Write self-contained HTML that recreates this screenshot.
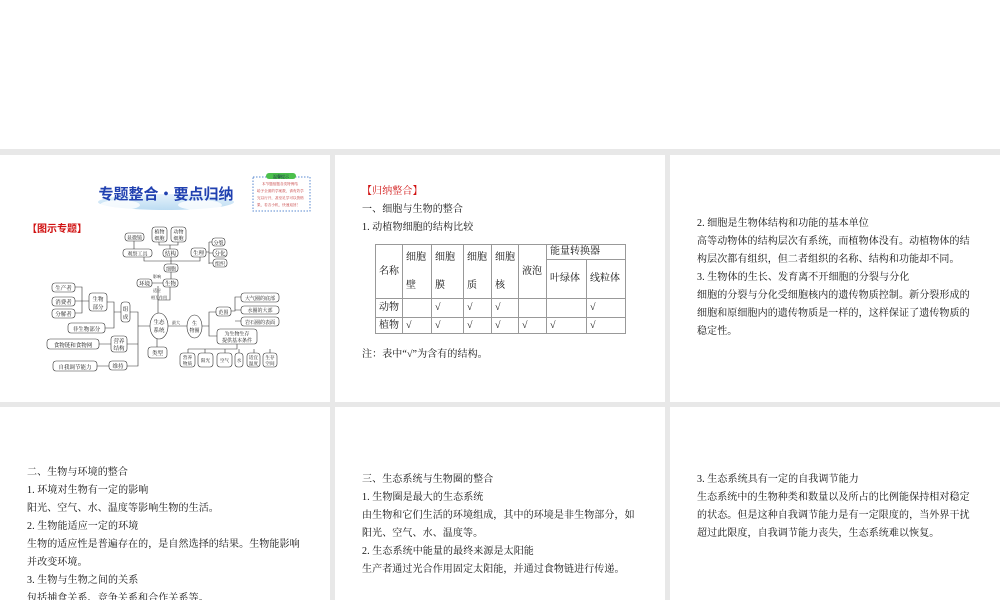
<!DOCTYPE html>
<html><head><meta charset="utf-8"><style>
*{margin:0;padding:0;box-sizing:border-box}
body{width:1000px;height:600px;overflow:hidden;background:#fff;position:relative;font-family:"Liberation Serif","Noto Serif CJK SC",serif;color:#111}
.band{position:absolute;background:#e8e8e8}
.s{position:absolute;background:#fff;overflow:hidden}
.t{position:absolute;font-size:10px;line-height:18px;white-space:nowrap;letter-spacing:0.1px}
.red{color:#d01010}
table{position:absolute;border-collapse:collapse;font-size:10px;line-height:14px}
td{border:1px solid #999;padding:0 3px;vertical-align:middle}
</style></head><body>
<div class="band" style="left:0;top:149px;width:1000px;height:6px"></div>
<div class="band" style="left:0;top:402px;width:1000px;height:5px"></div>
<div class="band" style="left:330px;top:155px;width:5px;height:445px"></div>
<div class="band" style="left:665px;top:155px;width:5px;height:445px"></div>

<!-- slide 1 -->
<div class="s" style="left:0;top:155px;width:330px;height:247px">
<svg width="330" height="247" style="position:absolute;left:0;top:0" font-family="Noto Serif CJK SC, serif">
<defs><linearGradient id="cl" x1="0" y1="0" x2="0" y2="1"><stop offset="0" stop-color="#e6f2fb"/><stop offset="1" stop-color="#bcdcf2"/></linearGradient></defs>
<ellipse cx="166" cy="47" rx="68" ry="8" fill="url(#cl)"/>
<ellipse cx="120" cy="50" rx="20" ry="5" fill="#fff" opacity="0.8"/>
<ellipse cx="200" cy="50" rx="22" ry="5" fill="#fff" opacity="0.8"/>
<text x="166" y="44" font-size="15" font-weight="bold" fill="#2040b0" text-anchor="middle" font-family="Noto Sans CJK SC, sans-serif">专题整合·要点归纳</text>
<rect x="253" y="22" width="57" height="34" fill="#fff" stroke="#5a8ad0" stroke-dasharray="1.5,1.5"/>
<rect x="266" y="18" width="30" height="6" rx="3" fill="#4cc04c"/>
<text x="281" y="23" font-size="4" fill="#114" text-anchor="middle">温馨提示</text>
<g font-size="3.6" fill="#c03030"><text x="262" y="30">本节题组题各类特例结</text><text x="257" y="37">给予全面的学案数，请有效学</text><text x="257" y="44">完以行开，甚至足学可以资格</text><text x="257" y="51">果，若否小机，快速返回！</text></g>
<text x="27" y="77" font-size="10" font-weight="bold" fill="#d01010" font-family="Noto Sans CJK SC, sans-serif">【图示专题】</text>
<g transform="translate(0,-155)" stroke="#333" stroke-width="0.6" fill="none">
<!-- lines -->
<path d="M134 241V249M159 242V245H178V242M170 245V249M144 257V261H200V257M206 252H209M209 242V264M209 242H213M209 253H213M209 263H213M171 257V264M171 272V279M152 283H163M158 286V300M170 287V300H158M158 300V313"/>
<path d="M75 287H82V313H75M75 301H89M82 313V313M107 302H114V328H105M114 312H121M130 312H138V366H127M127 344H138M138 326H150M99 344H111M97 366H109M157 339V347"/>
<path d="M168 326H187M202 326H209V312H216M209 326V336H217M231 311H235V297H241M235 310H241M235 321H241M237 344V349H188M188 349V353M205 349V353M225 349V353M239 349V353M254 349V353M270 349V353"/>
</g>
<g transform="translate(0,-155)" font-size="5.5" fill="#111" text-anchor="middle">
<g fill="#fff" stroke="#333" stroke-width="0.6">
<rect x="125" y="233" width="19" height="8" rx="3"/>
<rect x="152" y="227" width="15" height="15" rx="3"/>
<rect x="171" y="227" width="15" height="15" rx="3"/>
<rect x="123" y="249" width="29" height="8" rx="3"/>
<rect x="163" y="249" width="15" height="8" rx="3"/>
<rect x="191" y="248" width="15" height="9" rx="3"/>
<rect x="212" y="238" width="13" height="8" rx="3"/>
<rect x="213" y="249" width="14" height="8" rx="3"/>
<rect x="213" y="259" width="14" height="8" rx="3"/>
<rect x="164" y="264" width="14" height="8" rx="3"/>
<rect x="137" y="279" width="15" height="8" rx="3"/>
<rect x="163" y="279" width="15" height="8" rx="3"/>
<rect x="52" y="283" width="23" height="9" rx="3"/>
<rect x="52" y="297" width="23" height="9" rx="3"/>
<rect x="52" y="309" width="23" height="9" rx="3"/>
<rect x="89" y="293" width="18" height="18" rx="3"/>
<rect x="68" y="323" width="37" height="10" rx="3"/>
<rect x="121" y="302" width="9" height="20" rx="3"/>
<ellipse cx="159" cy="326" rx="9" ry="13"/>
<rect x="47" y="339" width="52" height="10" rx="3"/>
<rect x="111" y="336" width="16" height="16" rx="3"/>
<rect x="148" y="347" width="19" height="11" rx="3"/>
<rect x="53" y="361" width="44" height="10" rx="3"/>
<rect x="109" y="361" width="18" height="9" rx="3"/>
<ellipse cx="194.5" cy="326.5" rx="7.5" ry="11.5"/>
<rect x="216" y="307" width="15" height="9" rx="3"/>
<rect x="241" y="293" width="38" height="9" rx="3"/>
<rect x="241" y="306" width="38" height="8" rx="3"/>
<rect x="241" y="317" width="38" height="9" rx="3"/>
<rect x="217" y="329" width="40" height="15" rx="3"/>
<rect x="180" y="353" width="15" height="14" rx="3"/>
<rect x="198" y="353" width="15" height="14" rx="3"/>
<rect x="217" y="353" width="15" height="14" rx="3"/>
<rect x="235" y="353" width="8" height="14" rx="3"/>
<rect x="247" y="353" width="13" height="14" rx="3"/>
<rect x="263" y="353" width="14" height="14" rx="3"/>
</g>
<text x="134.5" y="239.5" font-size="5">显微镜</text>
<text x="159.5" y="233.5" font-size="5">植物</text><text x="159.5" y="240" font-size="5">细胞</text>
<text x="178.5" y="233.5" font-size="5">动物</text><text x="178.5" y="240" font-size="5">细胞</text>
<text x="137.5" y="255.5" font-size="5">观察工具</text>
<text x="170.5" y="255.5">结构</text>
<text x="198.5" y="255">生理</text>
<text x="218.5" y="244.5" font-size="5">分裂</text>
<text x="220" y="255.5">分化</text>
<text x="220" y="265.5" font-size="5">组织</text>
<text x="171" y="270.5" font-size="5">细胞</text>
<text x="144.5" y="285.5">环境</text>
<text x="170.5" y="285.5">生物</text>
<text x="157" y="278" font-size="4">影响</text>
<text x="157" y="292" font-size="4">适应</text>
<text x="159" y="299" font-size="4">相互作用</text>
<text x="63.5" y="290">生产者</text>
<text x="63.5" y="304">消费者</text>
<text x="63.5" y="316">分解者</text>
<text x="98" y="301">生物</text><text x="98" y="309">部分</text>
<text x="86.5" y="331">非生物部分</text>
<text x="125.5" y="311">组</text><text x="125.5" y="319">成</text>
<text x="159" y="324">生态</text><text x="159" y="332">系统</text>
<text x="73" y="347">食物链和食物网</text>
<text x="119" y="343">营养</text><text x="119" y="350">结构</text>
<text x="157.5" y="355">类型</text>
<text x="75" y="369">自我调节能力</text>
<text x="118" y="368">维持</text>
<text x="176" y="324" font-size="4">最大</text>
<text x="194.5" y="325" font-size="5">生</text><text x="194.5" y="332" font-size="5">物圈</text>
<text x="223.5" y="314" font-size="5">范围</text>
<text x="260" y="300" font-size="5">大气圈的底部</text>
<text x="260" y="312" font-size="5">水圈的大部</text>
<text x="260" y="324" font-size="5">岩石圈的表面</text>
<text x="237" y="335.5" font-size="5">为生物生存</text><text x="237" y="342" font-size="5">提供基本条件</text>
<g font-size="4.6"><text x="187.5" y="359">营养</text><text x="187.5" y="365">物质</text>
<text x="205.5" y="362">阳光</text><text x="224.5" y="362">空气</text><text x="239" y="362">水</text>
<text x="253.5" y="359">适宜</text><text x="253.5" y="365">温度</text>
<text x="270" y="359">生存</text><text x="270" y="365">空间</text></g>
</g>
</svg>
</div>

<!-- slide 2 -->
<div class="s" style="left:335px;top:155px;width:330px;height:247px">
<div class="t red" style="left:27px;top:28px">【归纳整合】</div>
<div class="t" style="left:27px;top:46px">一、细胞与生物的整合</div>
<div class="t" style="left:27px;top:64px">1. 动植物细胞的结构比较</div>
<table style="left:40px;top:89px;width:251px">
<tr style="height:15px"><td rowspan="2" style="width:27px">名称</td><td rowspan="2" style="width:29px">细胞<br><br>壁</td><td rowspan="2" style="width:32px">细胞<br><br>膜</td><td rowspan="2" style="width:28px">细胞<br><br>质</td><td rowspan="2" style="width:27px">细胞<br><br>核</td><td rowspan="2" style="width:28px">液泡</td><td colspan="2">能量转换器</td></tr>
<tr style="height:39px"><td style="width:40px">叶绿体</td><td>线粒体</td></tr>
<tr style="height:19px"><td>动物</td><td></td><td>√</td><td>√</td><td>√</td><td></td><td></td><td>√</td></tr>
<tr style="height:16px"><td>植物</td><td>√</td><td>√</td><td>√</td><td>√</td><td>√</td><td>√</td><td>√</td></tr>
</table>
<div class="t" style="left:27px;top:191px">注：表中“√”为含有的结构。</div>
</div>

<!-- slide 3 -->
<div class="s" style="left:670px;top:155px;width:330px;height:247px">
<div class="t" style="left:27px;top:60px">2. 细胞是生物体结构和功能的基本单位</div>
<div class="t" style="left:27px;top:78px">高等动物体的结构层次有系统，而植物体没有。动植物体的结</div>
<div class="t" style="left:27px;top:96px">构层次都有组织，但二者组织的名称、结构和功能却不同。</div>
<div class="t" style="left:27px;top:114px">3. 生物体的生长、发育离不开细胞的分裂与分化</div>
<div class="t" style="left:27px;top:132px">细胞的分裂与分化受细胞核内的遗传物质控制。新分裂形成的</div>
<div class="t" style="left:27px;top:150px">细胞和原细胞内的遗传物质是一样的，这样保证了遗传物质的</div>
<div class="t" style="left:27px;top:168px">稳定性。</div>
</div>

<!-- slide 4 -->
<div class="s" style="left:0;top:407px;width:330px;height:193px">
<div class="t" style="left:27px;top:57px">二、生物与环境的整合</div>
<div class="t" style="left:27px;top:75px">1. 环境对生物有一定的影响</div>
<div class="t" style="left:27px;top:93px">阳光、空气、水、温度等影响生物的生活。</div>
<div class="t" style="left:27px;top:111px">2. 生物能适应一定的环境</div>
<div class="t" style="left:27px;top:129px">生物的适应性是普遍存在的，是自然选择的结果。生物能影响</div>
<div class="t" style="left:27px;top:147px">并改变环境。</div>
<div class="t" style="left:27px;top:165px">3. 生物与生物之间的关系</div>
<div class="t" style="left:27px;top:183px">包括捕食关系、竞争关系和合作关系等。</div>
</div>

<!-- slide 5 -->
<div class="s" style="left:335px;top:407px;width:330px;height:193px">
<div class="t" style="left:27px;top:64px">三、生态系统与生物圈的整合</div>
<div class="t" style="left:27px;top:82px">1. 生物圈是最大的生态系统</div>
<div class="t" style="left:27px;top:100px">由生物和它们生活的环境组成，其中的环境是非生物部分，如</div>
<div class="t" style="left:27px;top:118px">阳光、空气、水、温度等。</div>
<div class="t" style="left:27px;top:136px">2. 生态系统中能量的最终来源是太阳能</div>
<div class="t" style="left:27px;top:154px">生产者通过光合作用固定太阳能，并通过食物链进行传递。</div>
</div>

<!-- slide 6 -->
<div class="s" style="left:670px;top:407px;width:330px;height:193px">
<div class="t" style="left:27px;top:64px">3. 生态系统具有一定的自我调节能力</div>
<div class="t" style="left:27px;top:82px">生态系统中的生物种类和数量以及所占的比例能保持相对稳定</div>
<div class="t" style="left:27px;top:100px">的状态。但是这种自我调节能力是有一定限度的，当外界干扰</div>
<div class="t" style="left:27px;top:118px">超过此限度，自我调节能力丧失，生态系统难以恢复。</div>
</div>
</body></html>
